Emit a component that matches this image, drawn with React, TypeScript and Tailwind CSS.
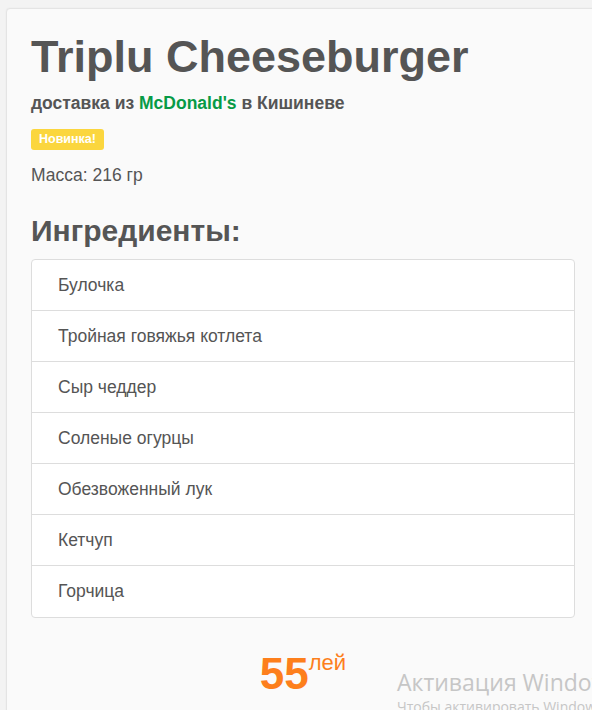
import React from 'react';

const ingredients = [
  'Булочка',
  'Тройная говяжья котлета',
  'Сыр чеддер',
  'Соленые огурцы',
  'Обезвоженный лук',
  'Кетчуп',
  'Горчица',
];

const App: React.FC = () => {
  return (
    <div
      className="relative h-[710px] w-[592px] overflow-hidden bg-[#f3f3f3] pl-[6px] pt-[8px] text-[#555555]"
      style={{ fontFamily: '"Liberation Sans", Arial, sans-serif' }}
    >
      <div className="h-[760px] w-[594px] rounded-[4px] border border-[#e4e4e4] bg-[#fafafa] px-[24px] pt-[24px] shadow-[0_0_2px_rgba(0,0,0,0.06)]">
        <h1 className="text-[45px] font-bold leading-[48px]">Triplu Cheeseburger</h1>

        <p className="mt-[12px] text-[17.5px] font-bold leading-[20px]">
          доставка из <span className="text-[#079a46]">McDonald's</span> в Кишиневе
        </p>

        <div className="mt-[16px] flex">
          <span className="rounded-[3px] bg-[#fbd63e] px-[8px] text-[12.5px] font-bold leading-[21px] text-white">
            Новинка!
          </span>
        </div>

        <p className="mt-[13px] text-[17.5px] leading-[24px]">Масса: 216 гр</p>

        <h2 className="mt-[27px] text-[30px] font-bold leading-[33px]">Ингредиенты:</h2>

        <ul className="mt-[12px] overflow-hidden rounded-[4px] border border-[#dddddd] bg-white">
          {ingredients.map((item, i) => (
            <li
              key={item}
              className={`flex h-[51px] items-center pl-[26px] text-[17.5px] ${
                i < ingredients.length - 1 ? 'border-b border-[#dddddd]' : ''
              }`}
            >
              {item}
            </li>
          ))}
        </ul>

        <div className="mt-[34px] flex justify-center">
          <div className="flex items-start text-[#fd7f1c]">
            <span className="text-[44px] font-bold leading-[44px]">55</span>
            <span className="mt-[-2px] text-[22px] leading-[26px]">лей</span>
          </div>
        </div>
      </div>

      {/* Windows watermark */}
      <div
        className="pointer-events-none absolute left-[397px] top-[666px] whitespace-nowrap text-[#c6c6c6]"
        style={{ fontFamily: '"Open Sans", "Noto Sans", sans-serif' }}
      >
        <div className="text-[23px] leading-[32px]">Активация Windows</div>
        <div className="text-[14px] leading-[18px]">Чтобы активировать Windows, перейдите в раздел "Параметры".</div>
      </div>
    </div>
  );
};

export default App;
